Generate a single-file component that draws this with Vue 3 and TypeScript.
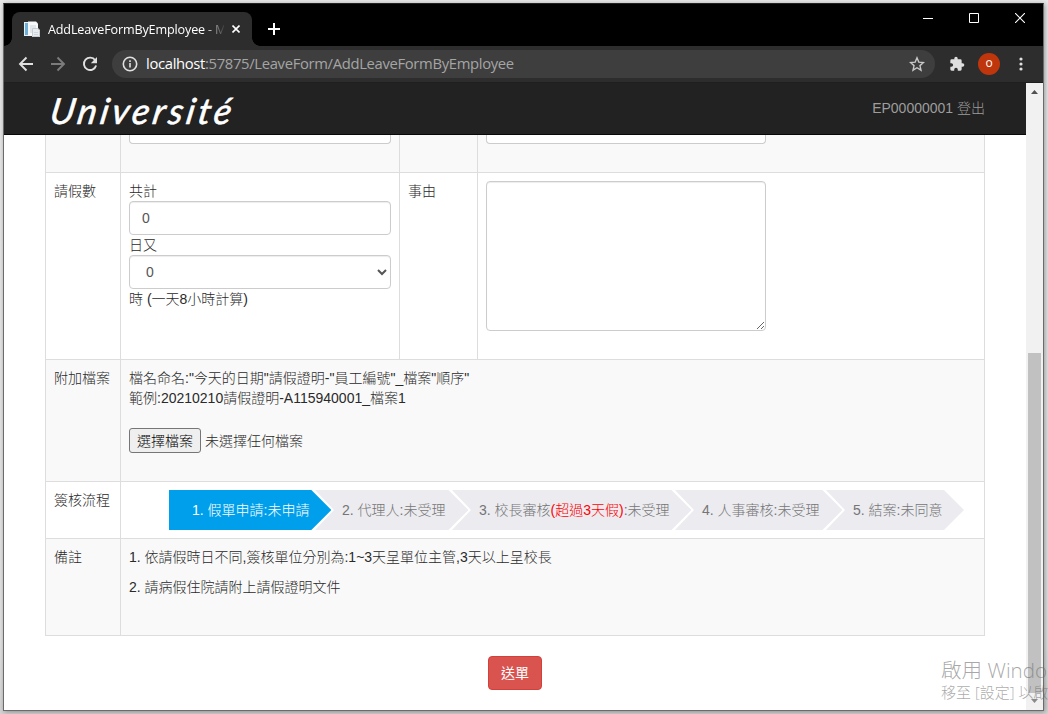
<script setup lang="ts">
import { ref } from 'vue'

interface Step {
  width: number
  before: string
  alert?: string
  after?: string
  active?: boolean
}

const steps: Step[] = [
  { width: 162.4, before: '1. 假單申請:未申請', active: true },
  { width: 153.4, before: '2. 代理人:未受理' },
  { width: 239.4, before: '3. 校長審核', alert: '(超過3天假)', after: ':未受理' },
  { width: 167.4, before: '4. 人事審核:未受理' },
  { width: 138, before: '5. 結案:未同意' },
]

const days = ref('0')
const hours = ref('0')
const reason = ref('')
</script>

<template>
  <div class="desktop">
    <div class="window">
      <div class="tabstrip">
        <div class="tab">
          <svg class="favicon" width="17" height="17" viewBox="0 0 17 17">
            <path d="M0 1h9v14H0z" fill="#e9f2f8" />
            <path d="M1 2h3v12H1z" fill="#6fb0d8" />
            <path d="M4 .5h8l2 2V15H4z" fill="#f6f8fa" />
            <path d="M6 4h6v8H6z" fill="#e1e6ea" />
            <path d="M8 7h6l2 2v7H8z" fill="#e9ebee" />
            <path d="M8.500 7.500h5l2 2v6h-7z" fill="none" stroke="#c3ccd3" />
            <path d="M10 11.500h4M10 13.500h4" stroke="#cfd6db" />
          </svg>
          <span class="tab-title">AddLeaveFormByEmployee - M</span>
          <svg class="tab-close" width="8" height="8" viewBox="0 0 8 8"><path d="M.5.5l7 7M7.500.5l-7 7" stroke="#fff" stroke-width="1.6" /></svg>
        </div>
        <svg class="new-tab" width="12" height="12" viewBox="0 0 12 12"><path d="M6 0v12M0 6h12" stroke="#fff" stroke-width="2" /></svg>
        <div class="controls">
          <svg width="10" height="10" viewBox="0 0 10 10"><path d="M0 5.500h10" stroke="#fff" /></svg>
          <svg width="10" height="10" viewBox="0 0 10 10"><path d="M.5.5h9v9h-9z" stroke="#fff" fill="none" /></svg>
          <svg width="10" height="10" viewBox="0 0 10 10"><path d="M0 0l10 10M10 0L0 10" stroke="#fff" stroke-width="1.1" /></svg>
        </div>
      </div>

      <div class="toolbar">
        <svg class="tool back" viewBox="0 0 16 16"><path d="M15 8H2M8.500 1.500L2 8l6.500 6.500" /></svg>
        <svg class="tool forward" viewBox="0 0 16 16"><path d="M1 8h13M7.500 1.500L14 8l-6.500 6.500" /></svg>
        <svg class="tool reload" viewBox="0 0 16 16"><path d="M13.200 4.200A6.200 6.200 0 1 0 14.100 9.500" /><path class="solid" d="M15 1v6.200H8.800z" /></svg>
        <div class="omnibox">
          <svg class="info" width="16" height="16" viewBox="0 0 16 16"><circle cx="8" cy="8" r="6.700" /><path d="M8 7v4.500M8 4.200v1.700" /></svg>
          <span class="url"><b>localhost</b>:57875/LeaveForm/AddLeaveFormByEmployee</span>
          <svg class="star" width="16" height="16" viewBox="0 0 16 16"><path d="M8 1.800l1.800 4.300 4.700.4-3.550 3.100 1.050 4.600L8 11.750 4 14.200l1.050-4.600L1.500 6.500l4.700-.4z" /></svg>
        </div>
        <svg class="puzzle" width="16" height="16" viewBox="0 0 24 24"><path d="M20.500 11H19V7a2 2 0 0 0-2-2h-4V3.500a2.500 2.500 0 0 0-5 0V5H4a2 2 0 0 0-2 2v3.800h1.500a2.700 2.700 0 0 1 0 5.400H2V20c0 1.100.9 2 2 2h3.800v-1.500a2.700 2.700 0 0 1 5.400 0V22H17a2 2 0 0 0 2-2v-4h1.500a2.500 2.500 0 0 0 0-5z" /></svg>
        <span class="avatar">o</span>
        <svg class="dots" width="4" height="14" viewBox="0 0 4 14"><circle cx="2" cy="2" r="1.600" /><circle cx="2" cy="7" r="1.600" /><circle cx="2" cy="12" r="1.600" /></svg>
      </div>

      <div class="viewport">
        <div class="page">
          <header class="navbar">
            <svg class="brand" width="190" height="46" viewBox="0 0 190 46">
              <text transform="translate(-2.5 37.5) skewX(-10)" textLength="181" lengthAdjust="spacing">Université</text>
            </svg>
            <span class="user">EP00000001 登出</span>
          </header>

          <main class="sheet">
            <div class="cell odd"></div>
            <div class="cell odd clipped"><div class="form-control stub"></div></div>
            <div class="cell odd"></div>
            <div class="cell odd clipped"><div class="form-control stub wide"></div></div>

            <div class="cell">請假數</div>
            <div class="cell">
              共計
              <input v-model="days" class="form-control" type="text" />
              日又
              <select v-model="hours" class="form-control"><option>0</option></select>
              時 (一天8小時計算)
            </div>
            <div class="cell">事由</div>
            <div class="cell"><textarea v-model="reason" class="form-control reason"></textarea></div>

            <div class="cell odd">附加檔案</div>
            <div class="cell odd span">
              <div>檔名命名:"今天的日期"請假證明-"員工編號"_檔案"順序"</div>
              <div>範例:20210210請假證明-A115940001_檔案1</div>
              <div class="file"><button type="button">選擇檔案</button><span>未選擇任何檔案</span></div>
            </div>

            <div class="cell">簽核流程</div>
            <div class="cell span">
              <div class="steps">
                <div
                  v-for="(step, i) in steps"
                  :key="i"
                  class="step"
                  :class="{ active: step.active }"
                  :style="{ width: step.width + 'px' }"
                >{{ step.before }}<em v-if="step.alert">{{ step.alert }}</em>{{ step.after }}</div>
              </div>
            </div>

            <div class="cell odd">備註</div>
            <div class="cell odd span">
              <p>1. 依請假時日不同,簽核單位分別為:1~3天呈單位主管,3天以上呈校長</p>
              <p>2. 請病假住院請附上請假證明文件</p>
            </div>
          </main>

          <button class="submit" type="button">送單</button>
        </div>

        <div class="scrollbar">
          <svg width="7" height="4" viewBox="0 0 7 4"><path d="M3.500 0L7 4H0z" fill="#505050" /></svg>
          <div class="track"><div class="thumb"></div></div>
          <svg width="7" height="4" viewBox="0 0 7 4"><path d="M3.500 4L7 0H0z" fill="#8a8a8a" /></svg>
        </div>
      </div>
    </div>

    <div class="watermark">
      <div class="wm-title">啟用 Windo</div>
      <div class="wm-sub">移至 [設定] 以啟</div>
    </div>
  </div>
</template>

<style>
body {
  margin: 0;
  overflow: hidden;
}
</style>

<style scoped>
* {
  box-sizing: border-box;
}
.desktop {
  position: relative;
  width: 1048px;
  height: 714px;
  padding: 3px 4px 3px 3px;
  overflow: hidden;
  background: linear-gradient(#e8e8e8 0, #e2e2e2 90%, #d4d4d4 100%);
  font: 14px/20px "Liberation Sans", "Noto Sans CJK TC", sans-serif;
  font-weight: 300;
  color: #2a2a2a;
}
.window {
  display: flex;
  flex-direction: column;
  width: 1041px;
  height: 708px;
  border: 1px solid #6b6b6b;
  border-top-color: #222;
  background: #000;
  box-shadow: 1px 1px 5px rgba(0, 0, 0, 0.35);
}
.tabstrip {
  display: flex;
  align-items: flex-end;
  height: 42px;
  padding-left: 8px;
  background: #000;
}
.tab {
  position: relative;
  display: flex;
  align-items: center;
  width: 240px;
  height: 34px;
  padding: 0 12px;
  border-radius: 8px 8px 0 0;
  background: #2d2d2d;
  font-family: "Open Sans", sans-serif;
}
.tab::before,
.tab::after {
  content: '';
  position: absolute;
  bottom: 0;
  width: 8px;
  height: 8px;
}
.tab::before {
  left: -8px;
  background: radial-gradient(circle at 0 0, #000 7.500px, #2d2d2d 8px);
}
.tab::after {
  right: -8px;
  background: radial-gradient(circle at 100% 0, #000 7.500px, #2d2d2d 8px);
}
.favicon {
  flex: none;
}
.tab-title {
  width: 176px;
  margin-left: 7px;
  padding-top: 1px;
  white-space: nowrap;
  font-size: 12.600px;
  font-weight: 400;
  letter-spacing: -0.150px;
  color: #fff;
  -webkit-mask-image: linear-gradient(90deg, #000 156px, transparent 178px);
  mask-image: linear-gradient(90deg, #000 156px, transparent 178px);
}
.tab-close {
  flex: none;
  margin-left: 8px;
}
.new-tab {
  margin: 0 0 11px 16px;
}
.controls {
  display: flex;
  gap: 36px;
  margin-left: auto;
  margin-right: 18px;
  margin-bottom: 23px;
}
.toolbar {
  display: flex;
  align-items: center;
  height: 37px;
  flex: none;
  padding-left: 14px;
  background: #2d2d2d;
  border-bottom: 1px solid #1f1f1f;
}
.tool {
  width: 16px;
  height: 16px;
  margin-right: 16px;
  fill: none;
  stroke: #e0e0e0;
  stroke-width: 1.900;
}
.forward {
  stroke: #7c7c7c;
}
.solid {
  fill: #e0e0e0;
  stroke: none;
}
.omnibox {
  display: flex;
  align-items: center;
  width: 823px;
  height: 28px;
  margin-left: -2px;
  padding: 0 10px;
  border-radius: 14px;
  background: #3e3e3e;
}
.info,
.star {
  fill: none;
  stroke: #e0e0e0;
  stroke-width: 1.600;
}
.star {
  margin-left: auto;
  stroke: #c8c8c8;
  stroke-width: 1.400;
}
.url {
  margin-left: 8px;
  padding-bottom: 2px;
  font: 400 14.800px/20px "Open Sans", sans-serif;
  letter-spacing: -0.330px;
  color: #a5a5a5;
}
.url b {
  font-weight: 400;
  color: #fff;
}
.puzzle {
  margin-left: 14px;
  fill: #dedede;
}
.avatar {
  width: 22px;
  height: 22px;
  margin-left: 13px;
  border-radius: 50%;
  background: #bf360c;
  color: #fff;
  font: 400 12px/20px "Open Sans", sans-serif;
  text-align: center;
}
.dots {
  margin-left: 19px;
  fill: #e0e0e0;
}
.viewport {
  display: flex;
  flex: 1;
  min-height: 0;
  background: #fff;
}
.page {
  width: 1022px;
  overflow: hidden;
}
.navbar {
  display: flex;
  align-items: center;
  justify-content: space-between;
  height: 52px;
  padding: 0 41px 0 47px;
  border-bottom: 1px solid #080808;
  background: #222;
}
.brand {
  overflow: visible;
  font: italic 400 36px Lato, sans-serif;
  fill: #fff;
  stroke: #fff;
  stroke-width: 0.600;
}
.user {
  padding-bottom: 2px;
  color: #9d9d9d;
}
.sheet {
  display: grid;
  grid-template-columns: 74px 278px 77px 506px;
  grid-template-rows: 37px 186px 121px 56px 96px;
  gap: 1px;
  width: 940px;
  margin-left: 41px;
  padding: 0 1px 1px;
  background: #ddd;
}
.cell {
  padding: 8px;
  background: #fff;
  white-space: nowrap;
}
.cell.odd {
  background: #f9f9f9;
}
.cell.span {
  grid-column: span 3;
}
.cell.clipped {
  padding-top: 0;
}
.form-control {
  display: block;
  width: 262px;
  height: 34px;
  margin: 0;
  padding: 6px 12px;
  border: 1px solid #ccc;
  border-radius: 4px;
  outline: none;
  background: #fff;
  box-shadow: inset 0 1px 1px rgba(0, 0, 0, 0.075);
  font: 14px/20px "Liberation Sans", "Noto Sans CJK TC", sans-serif;
  color: #555;
}
.stub {
  height: 9px;
  padding: 0;
  border-top: 0;
  border-radius: 0 0 4px 4px;
  box-shadow: none;
}
.stub.wide {
  width: 280px;
}
.reason {
  width: 280px;
  height: 150px;
}
.file {
  display: flex;
  align-items: center;
  margin-top: 20px;
}
.file button {
  width: 72px;
  height: 25px;
  margin-right: 4px;
  padding: 0;
  border: 1px solid #767676;
  border-radius: 3px;
  background: #efefef;
  font: inherit;
  line-height: 22px;
  color: #000;
}
.steps {
  display: flex;
  padding-left: 40px;
}
.step {
  flex: none;
  height: 40px;
  padding-left: 27px;
  line-height: 40px;
  color: #757575;
  background: #ebebf0;
  clip-path: polygon(0 0, calc(100% - 20px) 0, 100% 50%, calc(100% - 20px) 100%, 0 100%, 19px 50%);
}
.step + .step {
  margin-left: -16.400px;
}
.step.active {
  padding-left: 23px;
  color: #fff;
  background: #009fec;
  clip-path: polygon(0 0, calc(100% - 20px) 0, 100% 50%, calc(100% - 20px) 100%, 0 100%);
}
.step em {
  font-style: normal;
  color: #f00;
}
p {
  margin: 0 0 10px;
}
.submit {
  display: block;
  width: 54px;
  height: 34px;
  margin: 20px auto 0;
  padding: 0;
  border: 1px solid #d43f3a;
  border-radius: 4px;
  background: #d9534f;
  font: inherit;
  font-weight: 400;
  color: #fff;
}
.scrollbar {
  display: flex;
  flex-direction: column;
  align-items: center;
  justify-content: space-between;
  width: 17px;
  padding: 7px 0;
  background: #f1f1f1;
}
.track {
  display: flex;
  flex: 1;
  align-items: flex-end;
  padding-bottom: 6px;
}
.thumb {
  width: 13px;
  height: 340px;
  background: #c1c1c1;
}
.watermark {
  position: absolute;
  left: 941px;
  top: 658px;
  white-space: nowrap;
  font-family: "Open Sans", "Noto Sans CJK TC", sans-serif;
  color: rgba(110, 110, 110, 0.6);
}
.wm-title {
  font-size: 20.600px;
  line-height: 25px;
}
.wm-sub {
  font-size: 15px;
  line-height: 19px;
}
</style>
